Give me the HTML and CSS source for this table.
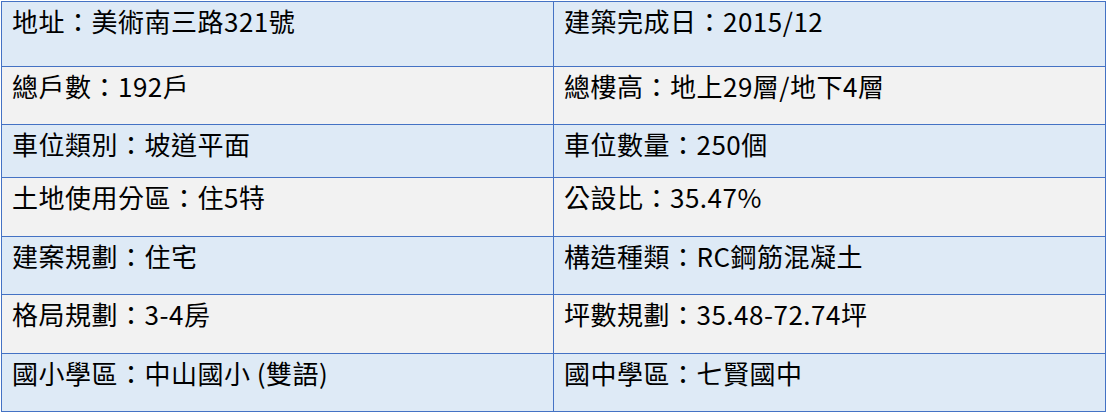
FILE: index.html
```html
<!DOCTYPE html>
<html lang="zh-Hant">
<head>
<meta charset="utf-8">
<title>建案資訊</title>
<link rel="stylesheet" href="styles.css">
</head>
<body>
<div class="info-table">
  <div class="cell blue">地址：美術南三路321號</div>
  <div class="cell blue">建築完成日：2015/12</div>
  <div class="cell grey">總戶數：192戶</div>
  <div class="cell grey">總樓高：地上29層/地下4層</div>
  <div class="cell blue">車位類別：坡道平面</div>
  <div class="cell blue">車位數量：250個</div>
  <div class="cell grey">土地使用分區：住5特</div>
  <div class="cell grey">公設比：35.47%</div>
  <div class="cell blue">建案規劃：住宅</div>
  <div class="cell blue">構造種類：RC鋼筋混凝土</div>
  <div class="cell grey">格局規劃：3-4房</div>
  <div class="cell grey">坪數規劃：35.48-72.74坪</div>
  <div class="cell blue">國小學區：中山國小 (雙語)</div>
  <div class="cell blue">國中學區：七賢國中</div>
</div>
</body>
</html>
```
FILE: styles.css
```css
html, body {
  margin: 0;
  padding: 0;
  background: #ffffff;
}

body {
  padding: 1px 0 0 1px;
}

.info-table {
  display: grid;
  grid-template-columns: 551px 551px;
  grid-template-rows: 64px 57px 52px 58px 57px 58px 57px;
  gap: 1px;
  padding: 1px;
  width: 1103px;
  background: #4472c4;
  font-family: "Noto Sans CJK TC", "Noto Sans", sans-serif;
  font-size: 26px;
  line-height: 26px;
  letter-spacing: 0.5px;
  color: #000;
}

.cell {
  padding: 6px 10px 0 10px;
  white-space: nowrap;
}

.blue {
  background: #deeaf6;
}

.grey {
  background: #f2f2f2;
}
```
